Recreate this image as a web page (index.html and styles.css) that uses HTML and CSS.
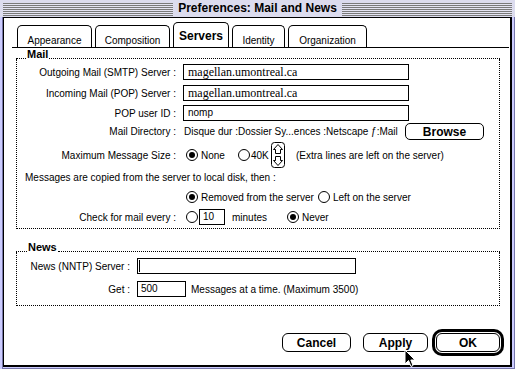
FILE: index.html
```html
<!DOCTYPE html>
<html>
<head>
<meta charset="utf-8">
<title>Preferences: Mail and News</title>
<link rel="stylesheet" href="styles.css">
</head>
<body>
<div class="window">
  <div class="titlebar">
    <div class="stripes"></div>
    <div class="title">Preferences: Mail and News</div>
    <div class="stripes"></div>
  </div>
  <div class="content">
    <div class="tabs">
      <div class="tab t-app">Appearance</div>
      <div class="tab t-comp">Composition</div>
      <div class="tab active t-serv">Servers</div>
      <div class="tab t-ident">Identity</div>
      <div class="tab t-org">Organization</div>
    </div>

    <section class="group mail">
      <div class="group-head"><span class="lead"></span><span class="group-title">Mail</span><span class="rest"></span></div>
      <div class="group-body mail-body">
        <div class="row r-field">
          <span class="lbl">Outgoing Mail (SMTP) Server :</span>
          <div class="field f-wide serif">magellan.umontreal.ca</div>
        </div>
        <div class="row r-field gap5">
          <span class="lbl">Incoming Mail (POP) Server :</span>
          <div class="field f-wide serif">magellan.umontreal.ca</div>
        </div>
        <div class="row r-field gap4">
          <span class="lbl">POP user ID :</span>
          <div class="field f-wide">nomp</div>
        </div>
        <div class="row r-dir gap2">
          <span class="lbl">Mail Directory :</span>
          <span class="path">Disque dur :Dossier Sy...ences :Netscape ƒ:Mail</span>
          <div class="btn browse">Browse</div>
        </div>
        <div class="row r-size gap2">
          <span class="lbl">Maximum Message Size :</span>
          <div class="opts">
            <div class="opt o-none"><span class="radio on"></span><span>None</span></div>
            <div class="opt o-40"><span class="radio"></span><span>40K</span></div>
            <svg class="stepper" width="14" height="26" viewBox="0 0 14 26">
              <rect x="0.5" y="0.5" width="13" height="25" rx="3" ry="3" fill="#fff" stroke="#000"/>
              <path d="M7 2.5 L11.5 7.5 L9.5 7.5 L9.5 11.5 L4.5 11.5 L4.5 7.5 L2.5 7.5 Z" fill="none" stroke="#000"/>
              <path d="M7 23.5 L11.5 18.5 L9.5 18.5 L9.5 14.5 L4.5 14.5 L4.5 18.5 L2.5 18.5 Z" fill="none" stroke="#000"/>
            </svg>
            <span class="note">(Extra lines are left on the server)</span>
          </div>
        </div>
        <div class="row r-text gap3">
          <span class="copied">Messages are copied from the server to local disk, then :</span>
        </div>
        <div class="row r-field gap6">
          <div class="opts indent">
            <div class="opt o-removed"><span class="radio on"></span><span>Removed from the server</span></div>
            <div class="opt"><span class="radio"></span><span>Left on the server</span></div>
          </div>
        </div>
        <div class="row r-field gap4">
          <span class="lbl">Check for mail every :</span>
          <div class="opts">
            <span class="radio"></span>
            <div class="field f-num">10</div>
            <span class="minutes">minutes</span>
            <div class="opt"><span class="radio on"></span><span>Never</span></div>
          </div>
        </div>
      </div>
    </section>

    <section class="group news">
      <div class="group-head"><span class="lead lead-news"></span><span class="group-title">News</span><span class="rest"></span></div>
      <div class="group-body news-body">
        <div class="row r-field">
          <span class="lbl lbl-news">News (NNTP) Server :</span>
          <div class="field f-news"><span class="caret"></span></div>
        </div>
        <div class="row r-field gap7">
          <span class="lbl lbl-news">Get :</span>
          <div class="field f-get">500</div>
          <span class="after">Messages at a time. (Maximum 3500)</span>
        </div>
      </div>
    </section>

    <div class="buttons">
      <div class="btn b-cancel">Cancel</div>
      <div class="btn b-apply">Apply</div>
      <div class="btn b-ok default">OK</div>
    </div>
  </div>

  <svg class="pointer" width="12" height="19" viewBox="0 0 12 19">
    <path d="M1 1 L1 15 L4.5 11.5 L7 17.5 L9 16.5 L6.8 11 L11 11 Z" fill="#000" stroke="#fff" stroke-width="1"/>
  </svg>
</div>
</body>
</html>
```

FILE: styles.css
```css
* { box-sizing: border-box; }

html, body {
  margin: 0;
  padding: 0;
}

body {
  width: 515px;
  height: 369px;
  overflow: hidden;
  background: #ccccff;
  font-family: "Liberation Sans", Arial, sans-serif;
  font-size: 10px;
  color: #000;
}

.window {
  position: relative;
  width: 515px;
  height: 369px;
  display: flex;
  flex-direction: column;
  padding: 0 3px 2px 3px;
  background: #ccccff;
  box-shadow: inset 2px 0 0 #ccccff, inset 3px 0 0 #7777aa, inset -1px 0 0 #7777aa, inset 0 -1px 0 #7777aa;
}

/* ---------- title bar ---------- */
.titlebar {
  height: 17px;
  display: flex;
  align-items: center;
  background: #dcdcee;
  margin: 0 -3px;
  padding: 0 3px;
}

.stripes {
  flex: 1;
  height: 13px;
  margin-top: 1px;
  background: repeating-linear-gradient(to bottom, #7a7a7a 0 1px, #e4e4f2 1px 2px);
}

.title {
  padding: 0 5px;
  font-weight: bold;
  font-size: 12px;
  line-height: 17px;
  white-space: nowrap;
}

/* ---------- content ---------- */
.content {
  flex: 1;
  display: flex;
  flex-direction: column;
  background: #fff;
  border-top: 1px solid #000;
  border-left: 1px solid #000;
  border-right: 2px solid #000;
  border-bottom: 2px solid #000;
}

/* ---------- tabs ---------- */
.tabs {
  display: flex;
  align-items: flex-end;
  gap: 3px;
  height: 26px;
  margin: 4px 1px 0 8px;
  padding-left: 5px;
  border-bottom: 1px solid #000;
}

.tab {
  height: 22px;
  border: 1px solid #000;
  border-bottom: none;
  border-radius: 5px 5px 0 0;
  text-align: center;
  padding-top: 10px;
  line-height: 10px;
  white-space: nowrap;
}

.tab.active {
  height: 25px;
  padding-top: 7px;
  font-weight: bold;
  font-size: 12px;
  line-height: 12px;
}

.t-app { width: 75px; }
.t-comp { width: 75px; }
.t-serv { width: 56px; }
.t-ident { width: 53px; }
.t-org { width: 79px; }

/* ---------- groups ---------- */
.group {
  margin: 0 10px 0 12px;
}

.news { margin-top: 12px; }

.group-head {
  display: flex;
  align-items: flex-end;
  height: 11px;
}

.lead {
  width: 10px;
  border-bottom: 1px dotted #000;
}

.lead-news { width: 11px; }

.rest {
  flex: 1;
  border-bottom: 1px dotted #000;
}

.group-title {
  padding: 0 1px;
  font-weight: bold;
  font-size: 11px;
  line-height: 10px;
}

.group-body {
  border: 1px dotted #000;
  border-top: none;
  display: flex;
  flex-direction: column;
}

.mail-body { padding: 5px 0 3px 0; }
.news-body { padding: 6px 0 8px 0; }

.row {
  display: flex;
  align-items: center;
  white-space: nowrap;
}

.r-field { height: 16px; }
.r-dir { height: 17px; }
.r-size { height: 26px; }
.r-text { height: 12px; }

.gap2 { margin-top: 2px; }
.gap3 { margin-top: 3px; }
.gap4 { margin-top: 4px; }
.gap5 { margin-top: 5px; }
.gap6 { margin-top: 6px; }
.gap7 { margin-top: 7px; }

.lbl {
  width: 159px;
  text-align: right;
  margin-right: 7px;
  flex: none;
}

.lbl-news { width: 113px; }

/* ---------- fields ---------- */
.field {
  height: 16px;
  border: 1px solid #000;
  background: #fff;
  padding-left: 3px;
  line-height: 14px;
  display: flex;
  align-items: center;
  flex: none;
}

.serif {
  font-family: "Liberation Serif", "Times New Roman", serif;
  font-size: 12px;
}

.f-wide { width: 226px; padding-left: 4px; }
.f-num { width: 26px; margin-left: 1px; }
.f-news { width: 219px; padding-left: 1px; }
.f-get { width: 49px; }

.caret {
  width: 1px;
  height: 12px;
  background: #000;
}

.after { margin-left: 5px; }

.path { margin-left: 1px; }

/* ---------- radios ---------- */
.opts {
  display: flex;
  align-items: center;
  margin-left: 3px;
}

.opts.indent { margin-left: 169px; }

.opt {
  display: flex;
  align-items: center;
  gap: 3px;
}

.o-none { width: 52px; }
.o-40 { width: 33px; gap: 1px; }
.o-removed { width: 132px; }

.radio {
  width: 12px;
  height: 12px;
  border: 1px solid #000;
  border-radius: 50%;
  background: #fff;
  display: flex;
  align-items: center;
  justify-content: center;
  flex: none;
}

.radio.on::after {
  content: "";
  width: 6px;
  height: 6px;
  border-radius: 50%;
  background: #000;
}

.stepper { flex: none; }

.note { margin-left: 11px; }

.minutes { margin-left: 7px; width: 55px; }

.copied { margin-left: 8px; }

/* ---------- buttons ---------- */
.btn {
  height: 17px;
  border: 1px solid #000;
  border-radius: 5px;
  background: #fff;
  display: flex;
  align-items: center;
  justify-content: center;
  font-weight: bold;
  font-size: 12px;
  flex: none;
}

.browse {
  width: 79px;
  margin-left: auto;
  margin-right: 15px;
}

.buttons {
  display: flex;
  justify-content: flex-end;
  margin: 27px 10px 0 0;
}

.buttons .btn { height: 19px; border-radius: 6px; }

.b-cancel { width: 69px; }
.b-apply { width: 65px; margin-left: 12px; }
.b-ok { width: 64px; margin-left: 8px; }

.default {
  box-shadow: 0 0 0 1px #fff, 0 0 0 4px #000;
  border-radius: 6px;
}

/* ---------- mouse pointer ---------- */
.pointer {
  position: absolute;
  left: 404px;
  top: 349px;
}
```
